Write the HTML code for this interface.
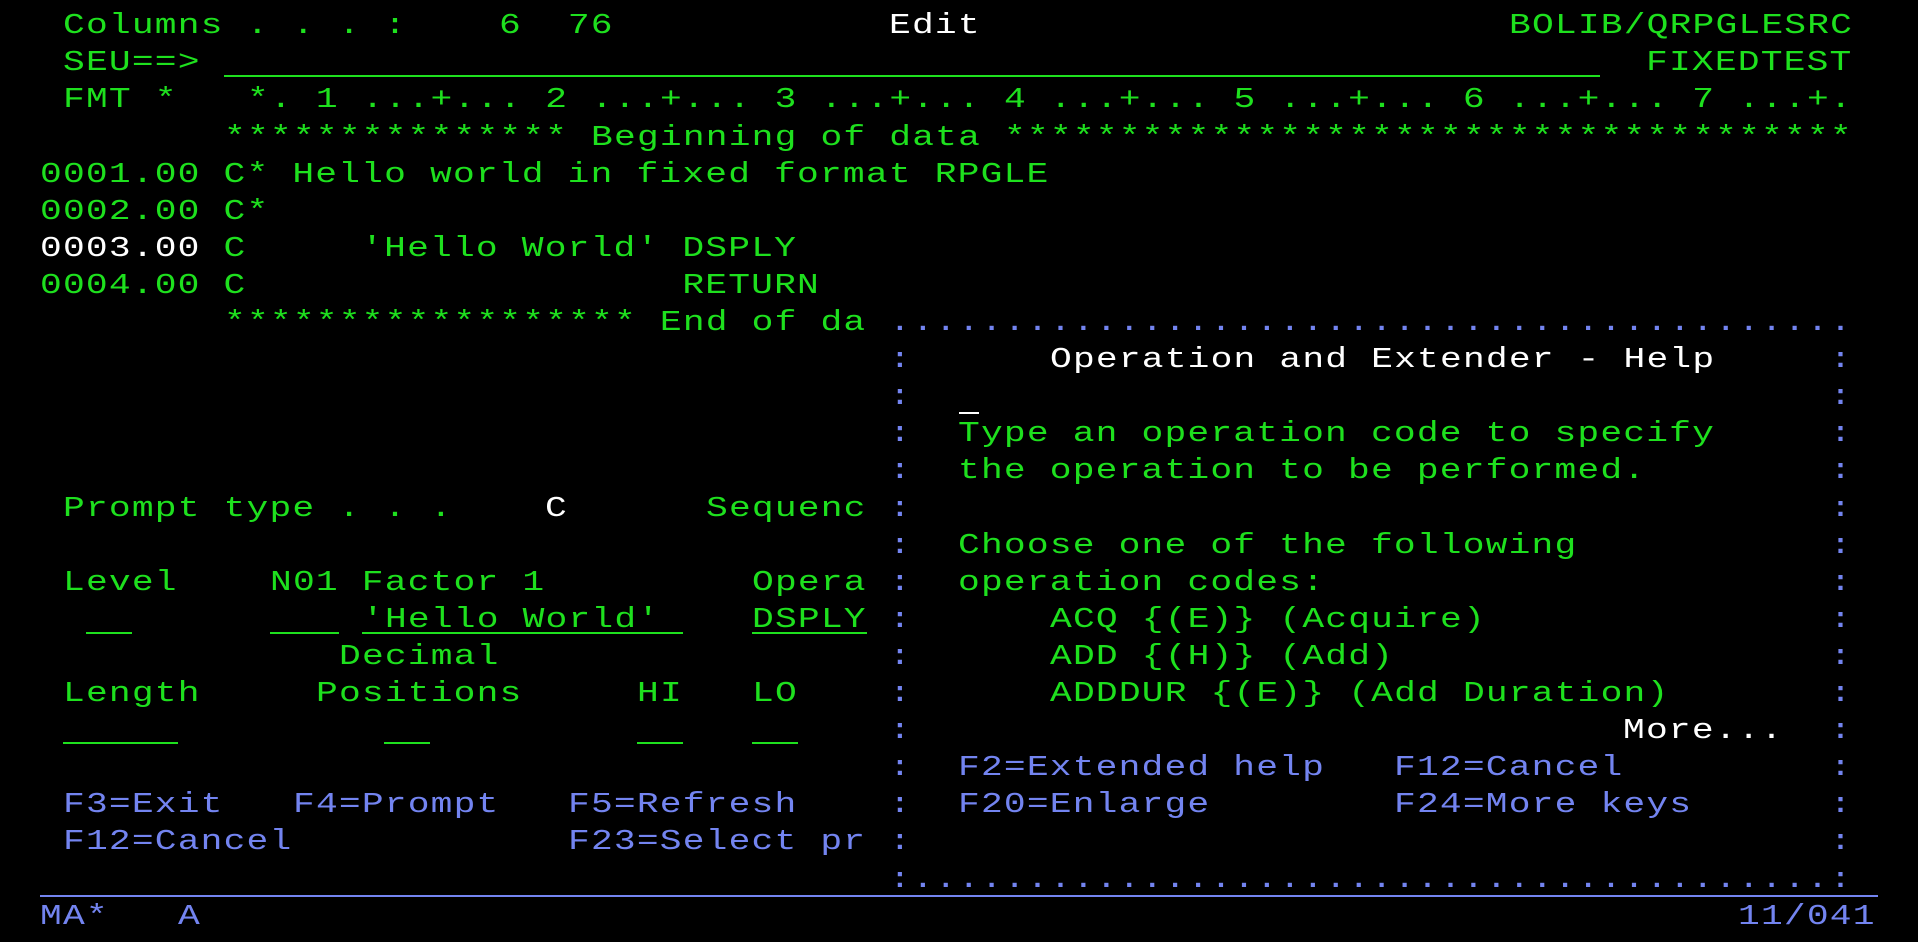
<!DOCTYPE html>
<html><head><meta charset="utf-8"><style>
html,body{margin:0;padding:0;background:#000;width:1918px;height:942px;overflow:hidden}
.t{position:absolute;font-family:"Liberation Mono","DejaVu Sans Mono",monospace;font-size:29px;letter-spacing:0.95px;line-height:37px;height:37px;white-space:pre;transform:scaleX(1.25);transform-origin:0 50%;color:#1ee01e}
.w{color:#fff}.b{color:#7384f0}
.u{position:absolute;height:2px;background:#1ee01e}
</style></head><body>
<div class="t" style="left:63.3px;top:7.2px">Columns . . . :</div>
<div class="t" style="left:499.1px;top:7.2px">6  76</div>
<div class="t w" style="left:889.1px;top:7.2px">Edit</div>
<div class="t" style="left:1508.5px;top:7.2px">BOLIB/QRPGLESRC</div>
<div class="t" style="left:63.3px;top:44.3px">SEU==&gt;</div>
<div class="u" style="left:224px;width:1376px;top:75px"></div>
<div class="t" style="left:1646.1px;top:44.3px">FIXEDTEST</div>
<div class="t" style="left:63.3px;top:81.4px">FMT *</div>
<div class="t" style="left:246.8px;top:81.4px">*. 1 ...+... 2 ...+... 3 ...+... 4 ...+... 5 ...+... 6 ...+... 7 ...+.</div>
<div class="t" style="left:223.9px;top:118.5px">*************** Beginning of data *************************************</div>
<div class="t" style="left:40.3px;top:155.6px">0001.00 C* Hello world in fixed format RPGLE</div>
<div class="t" style="left:40.3px;top:192.7px">0002.00 C*</div>
<div class="t" style="left:40.3px;top:229.8px"><span class="w">0003.00</span> C     'Hello World' DSPLY</div>
<div class="t" style="left:40.3px;top:266.9px">0004.00 C                   RETURN</div>
<div class="t" style="left:223.9px;top:304px">****************** End of da</div>

<div class="t b" style="left:889.1px;top:304px">..........................................</div>
<div class="t b" style="left:889.1px;top:341.1px">:                                        :</div>
<div class="t b" style="left:889.1px;top:378.2px">:                                        :</div>
<div class="t b" style="left:889.1px;top:415.3px">:                                        :</div>
<div class="t b" style="left:889.1px;top:452.4px">:                                        :</div>
<div class="t b" style="left:889.1px;top:489.5px">:                                        :</div>
<div class="t b" style="left:889.1px;top:526.6px">:                                        :</div>
<div class="t b" style="left:889.1px;top:563.7px">:                                        :</div>
<div class="t b" style="left:889.1px;top:600.8px">:                                        :</div>
<div class="t b" style="left:889.1px;top:637.9px">:                                        :</div>
<div class="t b" style="left:889.1px;top:675px">:                                        :</div>
<div class="t b" style="left:889.1px;top:712.1px">:                                        :</div>
<div class="t b" style="left:889.1px;top:749.2px">:                                        :</div>
<div class="t b" style="left:889.1px;top:786.3px">:                                        :</div>
<div class="t b" style="left:889.1px;top:823.4px">:                                        :</div>
<div class="t b" style="left:889.1px;top:860.5px">:........................................:</div>

<div class="t w" style="left:1049.7px;top:341.1px">Operation and Extender - Help</div>
<div class="u" style="left:959px;width:20px;top:412px;background:#fff"></div>
<div class="t" style="left:958px;top:415.3px">Type an operation code to specify</div>
<div class="t" style="left:958px;top:452.4px">the operation to be performed.</div>
<div class="t" style="left:958px;top:526.6px">Choose one of the following</div>
<div class="t" style="left:958px;top:563.7px">operation codes:</div>
<div class="t" style="left:1049.7px;top:600.8px">ACQ {(E)} (Acquire)</div>
<div class="t" style="left:1049.7px;top:637.9px">ADD {(H)} (Add)</div>
<div class="t" style="left:1049.7px;top:675px">ADDDUR {(E)} (Add Duration)</div>
<div class="t w" style="left:1623.2px;top:712.1px">More...</div>
<div class="t b" style="left:958px;top:749.2px">F2=Extended help</div>
<div class="t b" style="left:1393.8px;top:749.2px">F12=Cancel</div>
<div class="t b" style="left:958px;top:786.3px">F20=Enlarge</div>
<div class="t b" style="left:1393.8px;top:786.3px">F24=More keys</div>

<div class="t" style="left:63.3px;top:489.5px">Prompt type . . .</div>
<div class="t w" style="left:545px;top:489.5px">C</div>
<div class="t" style="left:705.6px;top:489.5px">Sequenc</div>
<div class="t" style="left:63.3px;top:563.7px">Level</div>
<div class="t" style="left:269.7px;top:563.7px">N01 Factor 1</div>
<div class="t" style="left:751.5px;top:563.7px">Opera</div>
<div class="t" style="left:361.5px;top:600.8px">'Hello World'</div>
<div class="t" style="left:751.5px;top:600.8px">DSPLY</div>
<div class="u" style="left:86px;width:46px;top:632px"></div>
<div class="u" style="left:269.7px;width:69px;top:632px"></div>
<div class="u" style="left:361.5px;width:321px;top:632px"></div>
<div class="u" style="left:751.5px;width:115px;top:632px"></div>
<div class="t" style="left:338.6px;top:637.9px">Decimal</div>
<div class="t" style="left:63.3px;top:675px">Length</div>
<div class="t" style="left:315.6px;top:675px">Positions</div>
<div class="t" style="left:636.8px;top:675px">HI</div>
<div class="t" style="left:751.5px;top:675px">LO</div>
<div class="u" style="left:63.3px;width:115px;top:742px"></div>
<div class="u" style="left:384.4px;width:46px;top:742px"></div>
<div class="u" style="left:636.8px;width:46px;top:742px"></div>
<div class="u" style="left:751.5px;width:46px;top:742px"></div>
<div class="t b" style="left:63.3px;top:786.3px">F3=Exit</div>
<div class="t b" style="left:292.7px;top:786.3px">F4=Prompt</div>
<div class="t b" style="left:568px;top:786.3px">F5=Refresh</div>
<div class="t b" style="left:63.3px;top:823.4px">F12=Cancel</div>
<div class="t b" style="left:568px;top:823.4px">F23=Select pr</div>

<div class="u" style="left:40px;width:1838px;top:895px;background:#7384f0"></div>
<div class="t b" style="left:40.3px;top:897.6px">MA*</div>
<div class="t b" style="left:178px;top:897.6px">A</div>
<div class="t b" style="left:1737.9px;top:897.6px">11/041</div>
</body></html>
